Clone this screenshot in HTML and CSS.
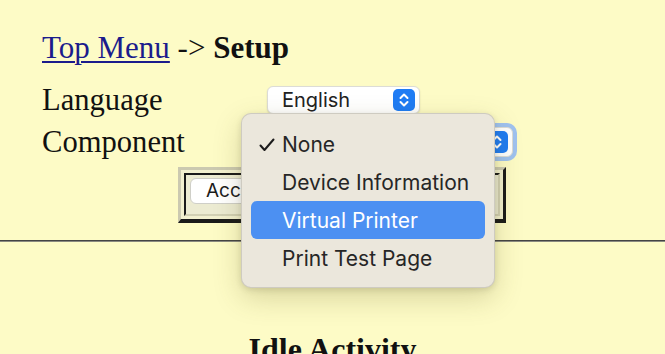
FILE: index.html
```html
<!DOCTYPE html>
<html>
<head>
<meta charset="utf-8">
<link rel="stylesheet" href="styles.css">
</head>
<body>
<div class="page">
  <h1 class="crumb"><a href="#">Top Menu</a> -&gt; <b>Setup</b></h1>
  <div class="form">
    <div class="label">Language</div>
    <div class="cell"><div class="select english"><span class="val">English</span><span class="stepper"><svg width="22" height="22" viewBox="0 0 22 22"><path d="M7.5 9 L11 5.5 L14.5 9 M7.5 13 L11 16.5 L14.5 13" fill="none" stroke="#fff" stroke-width="2" stroke-linecap="round" stroke-linejoin="round"/></svg></span></div></div>
    <div class="label">Component</div>
    <div class="cell"><div class="select comp"><span class="val"></span><span class="stepper"><svg width="22" height="22" viewBox="0 0 22 22"><path d="M7.5 9 L11 5.5 L14.5 9 M7.5 13 L11 16.5 L14.5 13" fill="none" stroke="#fff" stroke-width="2" stroke-linecap="round" stroke-linejoin="round"/></svg></span></div></div>
  </div>
  <table class="btns"><tr><td><div class="btnrow"><button class="btn">Accept</button></div></td></tr></table>
</div>
<hr class="rule">
<h2 class="idle">Idle Activity</h2>
<div class="menu">
  <div class="item"><svg class="check" width="16" height="16" viewBox="0 0 16 16"><path d="M1.5 8.5 L5.5 13 L14.5 2.5" fill="none" stroke="#1c1c1c" stroke-width="2" stroke-linecap="round" stroke-linejoin="round"/></svg><span>None</span></div>
  <div class="item"><span>Device Information</span></div>
  <div class="item active"><span>Virtual Printer</span></div>
  <div class="item"><span>Print Test Page</span></div>
</div>
</body>
</html>
```
FILE: styles.css
```css
html, body {
  margin: 0;
  padding: 0;
  background: #fdfbc6;
  width: 665px;
  height: 354px;
  overflow: hidden;
}
body {
  position: relative;
  font-family: "Liberation Serif", "Times New Roman", serif;
  font-size: 30.6px;
  color: #111;
}
.page {
  padding: 30px 0 0 42px;
}
.crumb {
  margin: 0;
  font-size: 31px;
  font-weight: normal;
  line-height: 36px;
}
.crumb a {
  color: #1b1b8c;
  text-decoration: underline;
  text-decoration-thickness: 1.5px;
  text-underline-offset: 3px;
}
.crumb b {
  font-weight: bold;
}
.form {
  margin-top: 13px;
  display: grid;
  grid-template-columns: 225px auto;
  grid-auto-rows: 42px;
}
.label {
  line-height: 42px;
}
.cell {
  display: flex;
  align-items: center;
}
.select {
  box-sizing: border-box;
  display: flex;
  align-items: center;
  justify-content: space-between;
  background: #fff;
  border: 1px solid #dcdcd6;
  border-radius: 6px;
  box-shadow: 0 1px 2px rgba(0,0,0,0.12);
  font-family: "Inter", "Noto Sans", sans-serif;
  font-size: 20px;
  color: #222;
  padding: 0 4px 0 14px;
}
.english {
  width: 153px;
  height: 28px;
}
.comp {
  width: 246px;
  height: 30px;
  box-shadow: 0 0 0 4px #9fc2ef;
}
.stepper {
  width: 22px;
  height: 22px;
  border-radius: 5px;
  background: #1f7cf4;
  display: flex;
}
.btns {
  margin: 4px 0 0 136px;
  width: 328px;
  height: 56px;
  border-collapse: separate;
  border-spacing: 3px;
  border-style: solid;
  border-width: 3px 3px 4px 3px;
  border-color: #cbc9b0 #1a1a1a #1a1a1a #cbc9b0;
  background: #f2f0cf;
}
.btns td {
  vertical-align: top;
  border-style: solid;
  border-width: 2px;
  border-color: #1a1a1a #d2d0b4 #d2d0b4 #1a1a1a;
  padding: 3px 4px;
  background: #ecebd2;
}
.btnrow {
  display: flex;
  gap: 8px;
}
.btn {
  font-family: "Inter", "Noto Sans", sans-serif;
  font-size: 19px;
  color: #1c1c1c;
  background: #fff;
  border: 1px solid #cfcfc8;
  border-radius: 6px;
  height: 26px;
  padding: 0 15px;
  line-height: 24px;
}
.rule {
  margin: 17px 0 0 0;
  border: none;
  border-top: 1px solid #444;
  border-bottom: 1px solid #8a8a80;
  height: 0;
}
.idle {
  margin: 89px 0 0 0;
  text-align: center;
  font-size: 32px;
  line-height: 36px;
  font-weight: bold;
}
.menu {
  position: absolute;
  left: 241px;
  top: 113px;
  width: 254px;
  box-sizing: border-box;
  padding: 11px 9px 10px 9px;
  background: #ebe7dc;
  border: 1px solid rgba(0,0,0,0.12);
  border-radius: 10px;
  box-shadow: 0 10px 28px rgba(90,80,20,0.22), 0 2px 6px rgba(0,0,0,0.12);
  font-family: "Inter", "Noto Sans", sans-serif;
  font-size: 21px;
  color: #262626;
}
.item {
  position: relative;
  height: 38px;
  display: flex;
  align-items: center;
  padding-left: 31px;
  border-radius: 6px;
}
.item .check {
  position: absolute;
  left: 8px;
  top: 12px;
}
.item.active {
  background: #4c90f2;
  color: #fff;
}
```
